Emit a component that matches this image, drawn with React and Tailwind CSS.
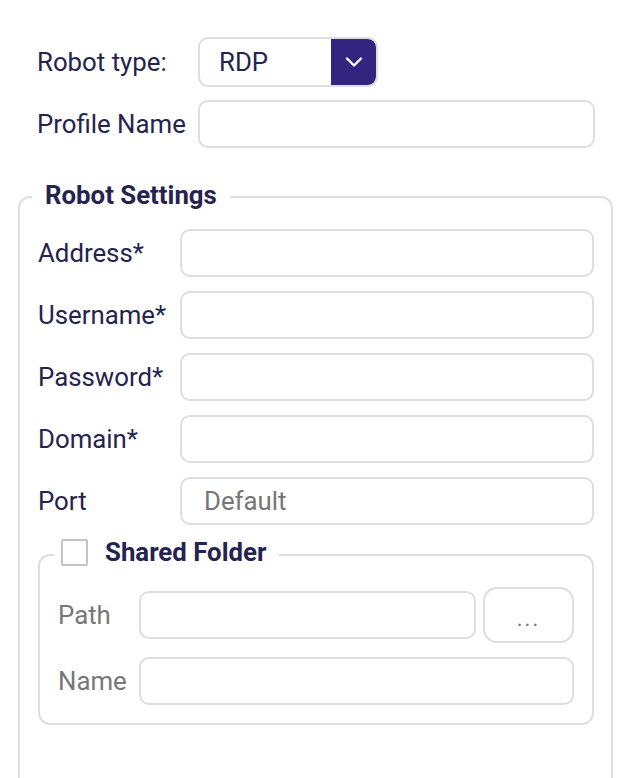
import React from "react";

const navy = "text-[#25234f]";

function Field({ label, placeholder }) {
  return (
    <div className="flex items-center">
      <label className={`w-[142px] shrink-0 ${navy}`}>{label}</label>
      <div className="flex-1 h-[48px] border-2 border-[#dedede] rounded-[10px] flex items-center pl-[22px] text-[#767676]">
        {placeholder}
      </div>
    </div>
  );
}

function Chevron() {
  return (
    <svg width="18" height="10" viewBox="0 0 18 10" fill="none">
      <polyline points="2,1.5 9,8.5 16,1.5" stroke="white" strokeWidth="2.4" strokeLinecap="round" strokeLinejoin="round" />
    </svg>
  );
}

export default function App() {
  return (
    <div
      className="bg-white min-h-[778px] pt-[37px] pl-[18px] pr-[11px] text-[25.8px] leading-[30px]"
      style={{ fontFamily: "Roboto, 'Noto Sans', sans-serif" }}
    >
      <div className="pl-[19px] pr-[18px] flex flex-col gap-[13px]">
        <div className="flex items-center">
          <span className={`w-[161px] shrink-0 ${navy}`}>Robot type:</span>
          <div className="w-[180px] h-[50px] border-2 border-[#dedede] rounded-[10px] flex overflow-hidden">
            <div className={`flex-1 flex items-center pl-[19px] ${navy}`}>RDP</div>
            <div className="w-[45px] bg-[#33247f] flex items-center justify-center rounded-r-[8px]">
              <Chevron />
            </div>
          </div>
        </div>
        <div className="flex items-center">
          <span className={`w-[161px] shrink-0 ${navy}`}>Profile Name</span>
          <div className="flex-1 h-[48px] border-2 border-[#dedede] rounded-[10px]" />
        </div>
      </div>

      <fieldset className="mt-[32px] border-2 border-[#dedede] rounded-[12px] pl-[18px] pr-[17px] pt-[15px] pb-[80px]">
        <legend className={`-ml-[6px] px-[13px] pb-[4px] font-bold ${navy}`}>Robot Settings</legend>
        <div className="flex flex-col gap-[14px]">
          <Field label="Address*" />
          <Field label="Username*" />
          <Field label="Password*" />
          <Field label="Domain*" />
          <Field label="Port" placeholder="Default" />
        </div>

        <fieldset className="mt-[12px] border-2 border-[#dedede] rounded-[12px] px-[18px] pt-[14px] pb-[18px]">
          <legend className="-ml-[4px] pl-[7px] pr-[13px] pb-[6px] flex items-center">
            <span className="w-[27px] h-[27px] border-2 border-[#c4c4c4] rounded-[2px] bg-white" />
            <span className={`ml-[17px] font-bold ${navy}`}>Shared Folder</span>
          </legend>
          <div className="flex flex-col gap-[14px]">
            <div className="flex items-center">
              <span className="w-[81px] shrink-0 text-[#777777]">Path</span>
              <div className="flex-1 h-[48px] border-2 border-[#dedede] rounded-[10px]" />
              <button className="ml-[7px] w-[91px] h-[56px] border-2 border-[#dedede] rounded-[14px] text-[#777777] text-[22px] tracking-[2px] pt-[8px] flex items-center justify-center">
                ...
              </button>
            </div>
            <div className="flex items-center">
              <span className="w-[81px] shrink-0 text-[#777777]">Name</span>
              <div className="flex-1 h-[48px] border-2 border-[#dedede] rounded-[10px]" />
            </div>
          </div>
        </fieldset>
      </fieldset>
    </div>
  );
}
